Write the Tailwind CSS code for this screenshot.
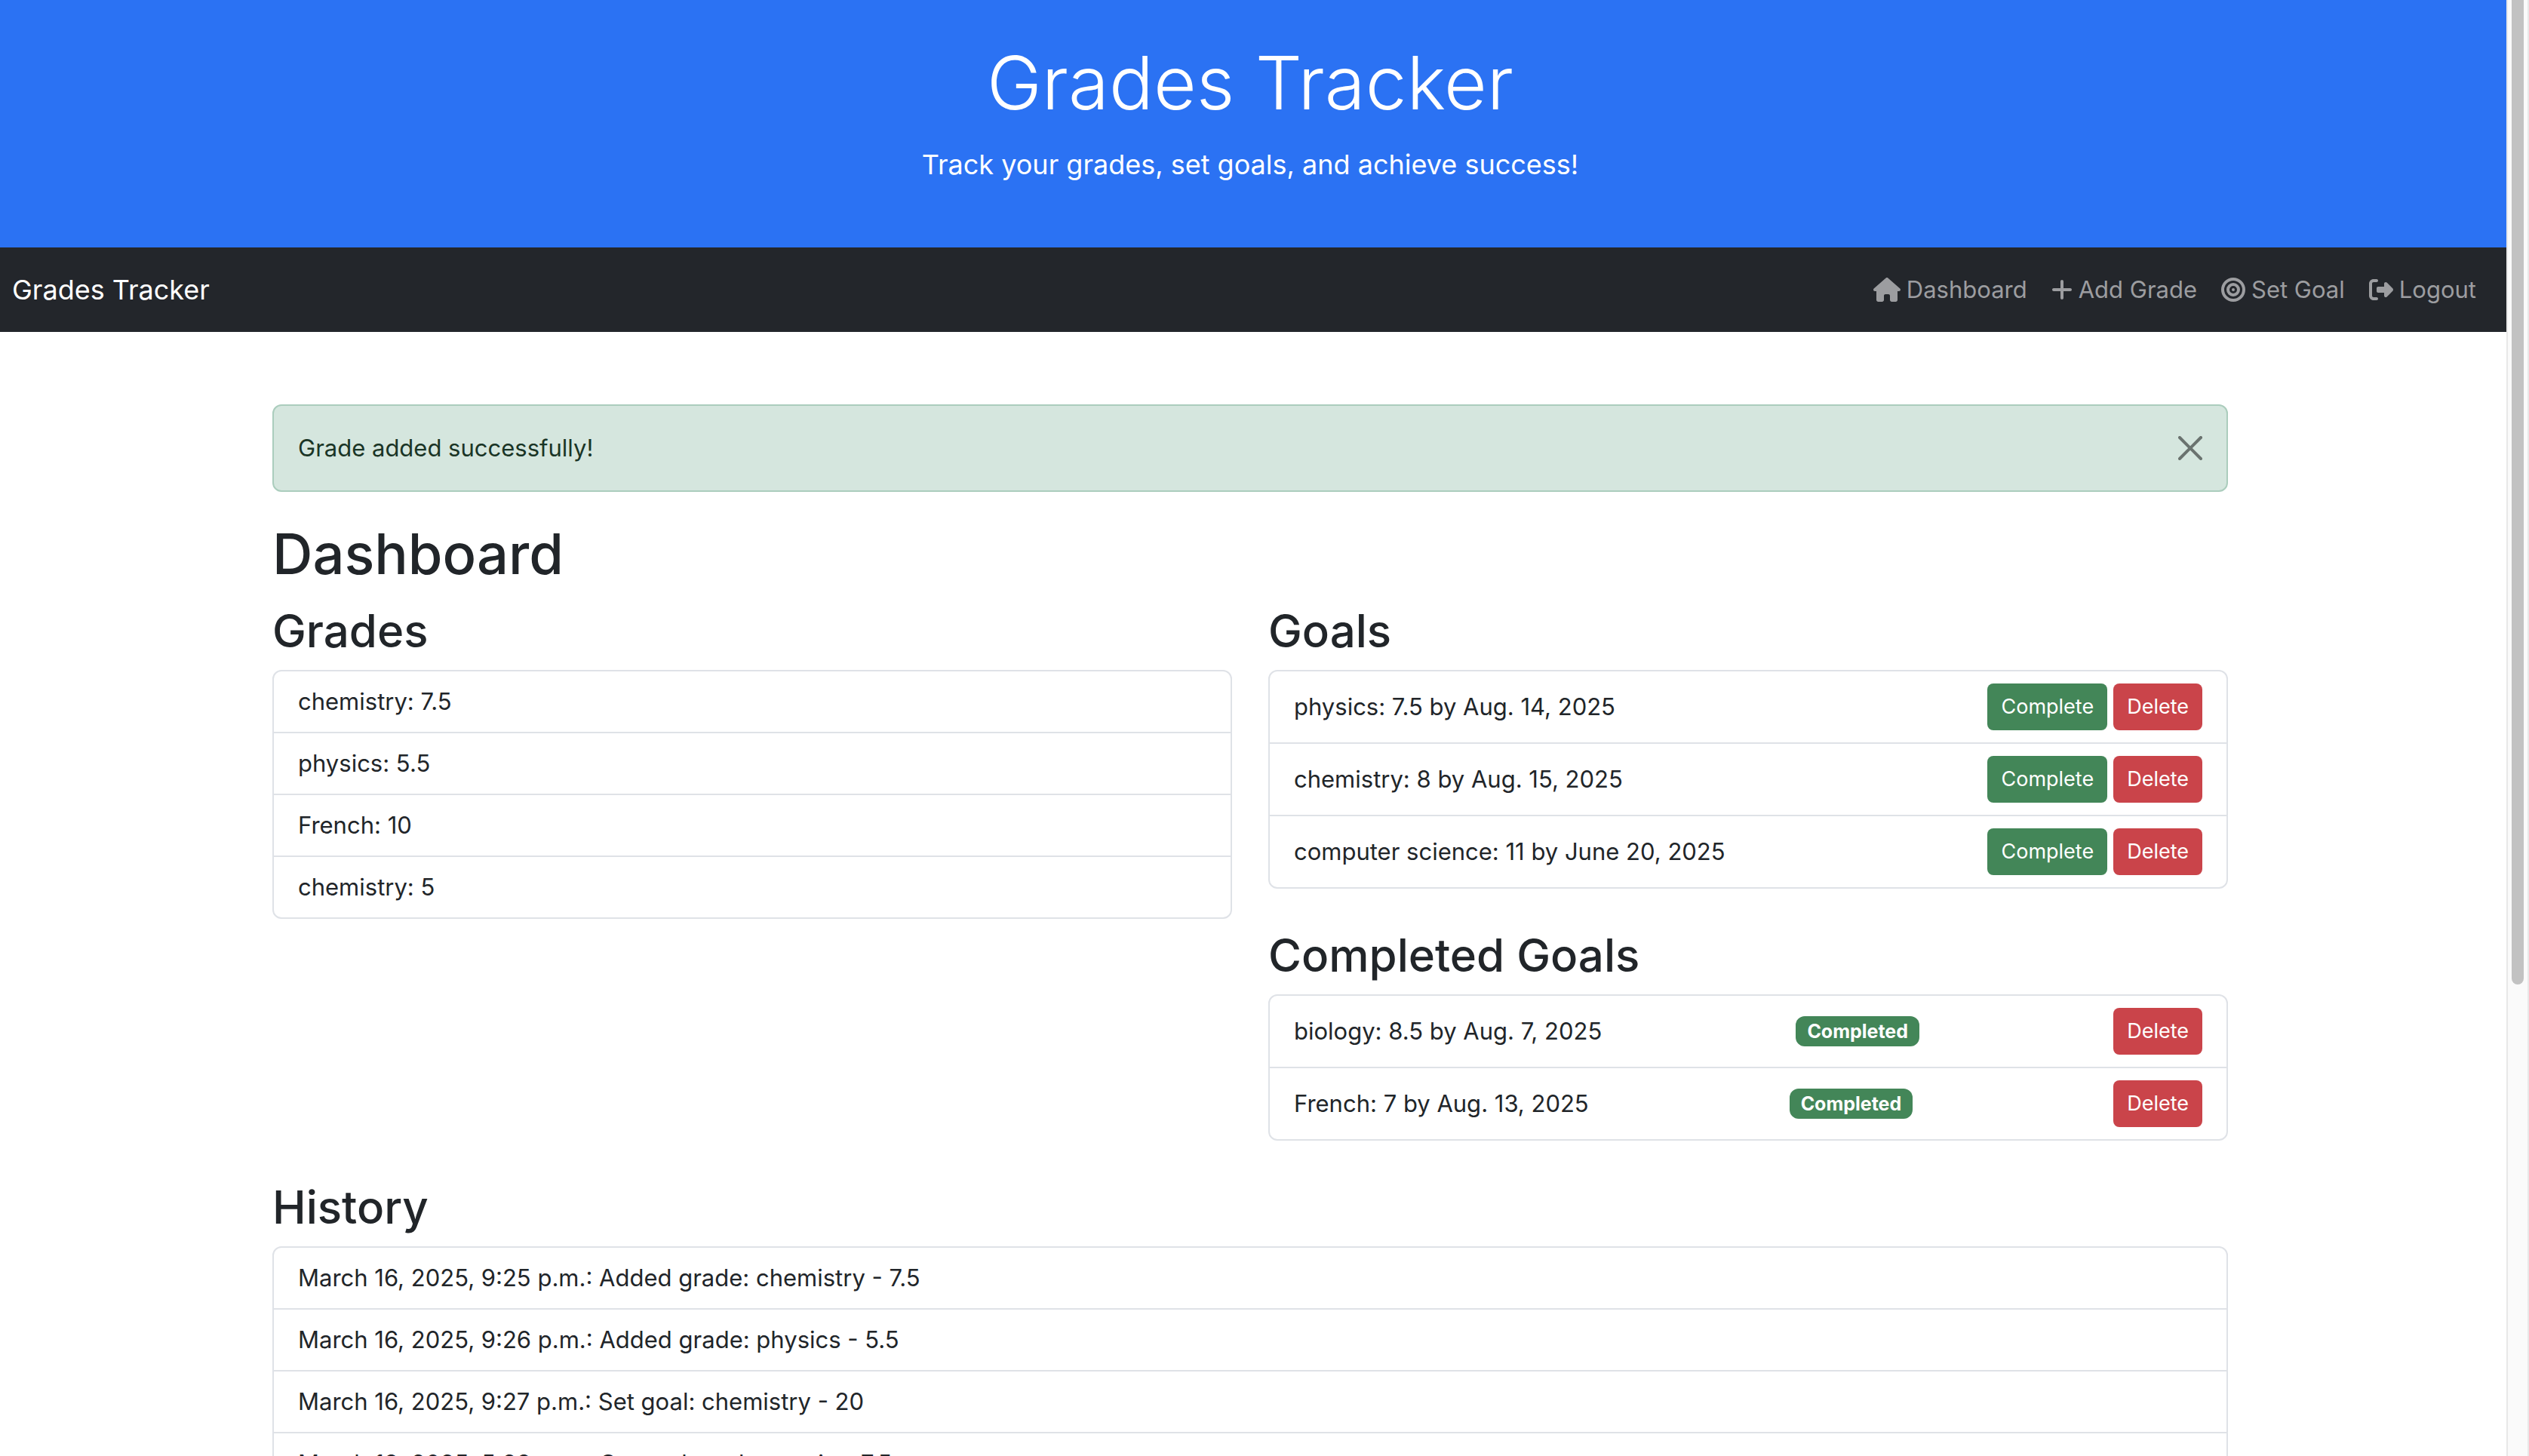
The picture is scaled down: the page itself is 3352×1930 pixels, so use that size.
<!DOCTYPE html>
<html lang="en">
<head>
<meta charset="utf-8">
<meta name="viewport" content="width=device-width, initial-scale=1">
<title>Grades Tracker</title>
<script src="https://cdn.jsdelivr.net/npm/@tailwindcss/browser@4"></script>
</head>
<body class="bg-white font-['Inter',sans-serif] text-[31px] leading-[48px] text-[#212529]">
<div class="flex h-screen overflow-hidden">
  <div class="min-w-0 flex-1">
    <header class="bg-[#2b72f3] pt-10 pr-2 pb-20 text-center text-white">
      <h1 class="mb-2 text-[98px] leading-[140px] font-light">Grades Tracker</h1>
      <p class="text-[36px] leading-[60px]">Track your grades, set goals, and achieve success!</p>
    </header>

    <nav class="flex h-28 items-center justify-between bg-[#23262b] pr-10 pl-4">
      <a href="#" class="text-[36px] text-white">Grades Tracker</a>
      <ul class="flex items-center gap-8 text-[#9c9da0]">
        <li><a href="#" class="flex items-center gap-2">
          <svg class="h-8 w-9" viewBox="0 0 576 512" fill="currentColor" aria-hidden="true"><path d="M575.8 255.5c0 18-15 32.1-32 32.1l-32 0 .7 160.2c0 2.7-.2 5.4-.5 8.1l0 16.2c0 22.1-17.9 40-40 40l-16 0c-1.1 0-2.2 0-3.3-.1c-1.4 .1-2.8 .1-4.2 .1L416 512l-24 0c-22.1 0-40-17.9-40-40l0-24 0-64c0-17.7-14.3-32-32-32l-64 0c-17.7 0-32 14.3-32 32l0 64 0 24c0 22.1-17.9 40-40 40l-24 0-31.9 0c-1.5 0-3-.1-4.5-.2c-1.2 .1-2.4 .2-3.6 .2l-16 0c-22.1 0-40-17.9-40-40l0-112c0-.9 0-1.9 .1-2.8l0-69.7-32 0c-18 0-32-14-32-32.1c0-9 3-17 10-24L266.4 8c7-7 15-8 22-8s15 2 21 7L564.8 231.5c8 7 12 15 11 24z"/></svg>
          Dashboard</a></li>
        <li><a href="#" class="flex items-center gap-2">
          <svg class="h-8 w-7" viewBox="0 0 448 512" fill="currentColor" aria-hidden="true"><path d="M256 80c0-17.7-14.3-32-32-32s-32 14.3-32 32l0 144L48 224c-17.7 0-32 14.3-32 32s14.3 32 32 32l144 0 0 144c0 17.7 14.3 32 32 32s32-14.3 32-32l0-144 144 0c17.7 0 32-14.3 32-32s-14.3-32-32-32l-144 0 0-144z"/></svg>
          Add Grade</a></li>
        <li><a href="#" class="flex items-center gap-2">
          <svg class="size-8" viewBox="0 0 512 512" fill="currentColor" aria-hidden="true"><path d="M448 256A192 192 0 1 0 64 256a192 192 0 1 0 384 0zM0 256a256 256 0 1 1 512 0A256 256 0 1 1 0 256zm256 80a80 80 0 1 0 0-160 80 80 0 1 0 0 160zm0-224a144 144 0 1 1 0 288 144 144 0 1 1 0-288zM224 256a32 32 0 1 1 64 0 32 32 0 1 1 -64 0z"/></svg>
          Set Goal</a></li>
        <li><a href="#" class="flex items-center gap-2">
          <svg class="size-8" viewBox="0 0 512 512" fill="currentColor" aria-hidden="true"><path d="M377.9 105.9L500.7 228.7c7.2 7.2 11.3 17.1 11.3 27.3s-4.1 20.1-11.3 27.3L377.9 406.1c-6.4 6.4-15 9.9-24 9.9c-18.7 0-33.9-15.2-33.9-33.9l0-62.1-128 0c-17.7 0-32-14.3-32-32l0-64c0-17.7 14.3-32 32-32l128 0 0-62.1c0-18.7 15.2-33.9 33.9-33.9c9 0 17.6 3.6 24 9.9zM160 96L96 96c-17.7 0-32 14.3-32 32l0 256c0 17.7 14.3 32 32 32l64 0c17.7 0 32 14.3 32 32s-14.3 32-32 32l-64 0c-53 0-96-43-96-96L0 128C0 75 43 32 96 32l64 0c17.7 0 32 14.3 32 32s-14.3 32-32 32z"/></svg>
          Logout</a></li>
      </ul>
    </nav>

    <div class="pt-24 pr-2">
      <main class="mx-auto w-full max-w-[2640px] px-6">
        <div role="alert" class="mb-8 flex items-center justify-between rounded-xl border-2 border-[#abcdbd] bg-[#d5e6de] p-8 text-[#1a3526]">
          Grade added successfully!
          <button type="button" aria-label="Close" class="text-black/50">
            <svg class="size-8" viewBox="0 0 16 16" fill="currentColor"><path d="M.293.293a1 1 0 0 1 1.414 0L8 6.586 14.293.293a1 1 0 1 1 1.414 1.414L9.414 8l6.293 6.293a1 1 0 0 1-1.414 1.414L8 9.414l-6.293 6.293a1 1 0 0 1-1.414-1.414L6.586 8 .293 1.707a1 1 0 0 1 0-1.414z"/></svg>
          </button>
        </div>

        <h1 class="mb-3 text-[74px] leading-[100px] font-medium">Dashboard</h1>

        <div class="grid grid-cols-2 gap-12">
          <section>
            <h2 class="mb-3 text-[60px] leading-[80px] font-medium">Grades</h2>
            <ul class="divide-y-2 divide-[#dfe2e7] rounded-xl border-2 border-[#dfe2e7]">
              <li class="px-8 py-4">chemistry: 7.5</li>
              <li class="px-8 py-4">physics: 5.5</li>
              <li class="px-8 py-4">French: 10</li>
              <li class="px-8 py-4">chemistry: 5</li>
            </ul>
          </section>

          <div>
            <section class="mb-12">
              <h2 class="mb-3 text-[60px] leading-[80px] font-medium">Goals</h2>
              <ul class="divide-y-2 divide-[#dfe2e7] rounded-xl border-2 border-[#dfe2e7]">
                <li class="flex items-center justify-between px-8 py-4">physics: 7.5 by Aug. 14, 2025
                  <div class="flex gap-2">
                    <button type="button" class="rounded-lg bg-[#438658] px-[18px] py-[10px] text-[27px] leading-[42px] text-white">Complete</button>
                    <button type="button" class="rounded-lg bg-[#ca444a] px-[18px] py-[10px] text-[27px] leading-[42px] text-white">Delete</button>
                  </div></li>
                <li class="flex items-center justify-between px-8 py-4">chemistry: 8 by Aug. 15, 2025
                  <div class="flex gap-2">
                    <button type="button" class="rounded-lg bg-[#438658] px-[18px] py-[10px] text-[27px] leading-[42px] text-white">Complete</button>
                    <button type="button" class="rounded-lg bg-[#ca444a] px-[18px] py-[10px] text-[27px] leading-[42px] text-white">Delete</button>
                  </div></li>
                <li class="flex items-center justify-between px-8 py-4">computer science: 11 by June 20, 2025
                  <div class="flex gap-2">
                    <button type="button" class="rounded-lg bg-[#438658] px-[18px] py-[10px] text-[27px] leading-[42px] text-white">Complete</button>
                    <button type="button" class="rounded-lg bg-[#ca444a] px-[18px] py-[10px] text-[27px] leading-[42px] text-white">Delete</button>
                  </div></li>
              </ul>
            </section>

            <section>
              <h2 class="mb-3 text-[60px] leading-[80px] font-medium">Completed Goals</h2>
              <ul class="divide-y-2 divide-[#dfe2e7] rounded-xl border-2 border-[#dfe2e7]">
                <li class="flex items-center justify-between px-8 py-4">biology: 8.5 by Aug. 7, 2025
                  <span class="rounded-xl bg-[#438658] px-[15px] py-2 text-[25px] leading-6 font-bold text-white">Completed</span>
                  <button type="button" class="rounded-lg bg-[#ca444a] px-[18px] py-[10px] text-[27px] leading-[42px] text-white">Delete</button></li>
                <li class="flex items-center justify-between px-8 py-4">French: 7 by Aug. 13, 2025
                  <span class="rounded-xl bg-[#438658] px-[15px] py-2 text-[25px] leading-6 font-bold text-white">Completed</span>
                  <button type="button" class="rounded-lg bg-[#ca444a] px-[18px] py-[10px] text-[27px] leading-[42px] text-white">Delete</button></li>
              </ul>
            </section>
          </div>
        </div>

        <section class="mt-12">
          <h2 class="mb-3 text-[60px] leading-[80px] font-medium">History</h2>
          <ul class="divide-y-2 divide-[#dfe2e7] rounded-xl border-2 border-[#dfe2e7]">
            <li class="px-8 py-4">March 16, 2025, 9:25 p.m.: Added grade: chemistry - 7.5</li>
            <li class="px-8 py-4">March 16, 2025, 9:26 p.m.: Added grade: physics - 5.5</li>
            <li class="px-8 py-4">March 16, 2025, 9:27 p.m.: Set goal: chemistry - 20</li>
            <li class="px-8 py-4">March 18, 2025, 5:28 p.m.: Created grade: music - 7.5</li>
          </ul>
        </section>
      </main>
    </div>
  </div>

  <!-- scroll track -->
  <div class="flex w-[30px] shrink-0 justify-center border-r-2 border-l-2 border-[#e8e8e8] bg-[#fafafa]" aria-hidden="true">
    <div class="h-[1305px] w-4 rounded-b-full bg-[#c2c2c2]"></div>
  </div>
</div>
</body>
</html>
